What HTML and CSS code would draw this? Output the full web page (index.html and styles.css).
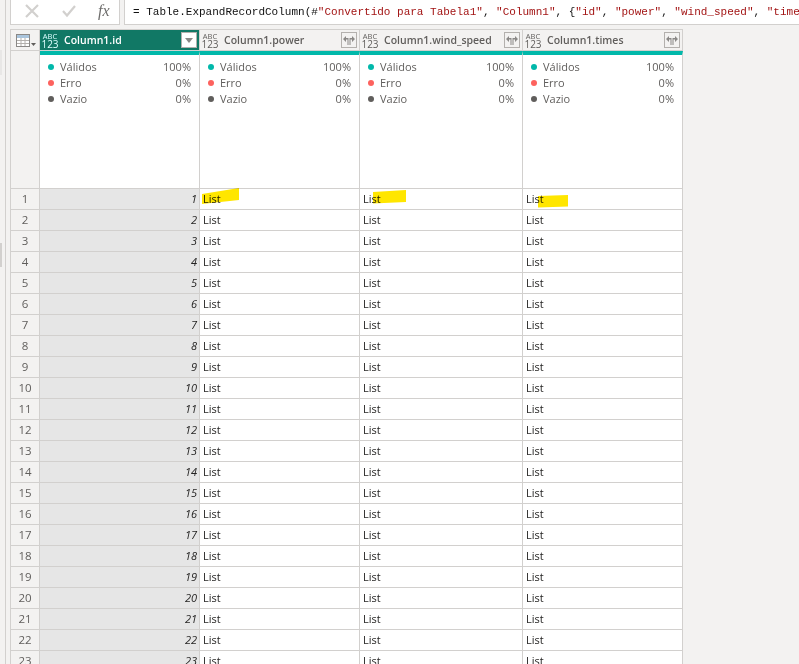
FILE: index.html
```html
<!DOCTYPE html>
<html lang="pt">
<head>
<meta charset="utf-8">
<title>Power Query</title>
<link rel="stylesheet" href="styles.css">
</head>
<body>
<div class="side"><i class="thumb thumb-a"></i><i class="thumb thumb-b"></i></div>
<main class="main">
  <div class="formula">
    <div class="fx-box">
      <svg class="ico" width="14" height="14" viewBox="0 0 14 14"><path d="M1 1L13 13M13 1L1 13" stroke="#d2d0ce" stroke-width="2.200" fill="none"/></svg>
      <svg class="ico" width="14" height="14" viewBox="0 0 14 14"><path d="M1 7L5 11.500L13 2" stroke="#d2d0ce" stroke-width="2.200" fill="none"/></svg>
      <span class="fx">fx</span>
    </div>
    <div class="fx-input"><span>= Table.ExpandRecordColumn(#<b>"Convertido para Tabela1"</b>, <b>"Column1"</b>, {<b>"id"</b>, <b>"power"</b>, <b>"wind_speed"</b>, <b>"time</b></span></div>
  </div>
  <div class="table">
    <div class="row head">
      <div class="c0 corner">
        <svg width="20" height="13" viewBox="0 0 20 13"><rect x="0.500" y="0.500" width="13" height="12" fill="#fff" stroke="#8a8886"/><path d="M1 1h12v3H1z" fill="#a9c4dc"/><path d="M5 4v8M9 4v8M1 6.500h12M1 9.500h12" stroke="#b3b0ad" fill="none"/><path d="M15 9h5l-2.500 3z" fill="#605e5c"/></svg>
      </div>
      <div class="c1 hc sel"><span class="type"><small>ABC</small>123</span><span class="name">Column1.id</span><span class="btn drop"><svg width="8" height="5" viewBox="0 0 8 5"><path d="M0 0h8L4 5z" fill="#8a8886"/></svg></span></div>
      <div class="c2 hc"><span class="type"><small>ABC</small>123</span><span class="name">Column1.power</span><span class="btn"><svg width="12" height="9" viewBox="0 0 12 9"><path d="M0 3L3 0v2h2.500v7h-1V3.500H3V6zM12 3L9 0v2H6.500v7h1V3.500H9V6z" fill="#8a8886"/></svg></span></div>
      <div class="c3 hc"><span class="type"><small>ABC</small>123</span><span class="name">Column1.wind_speed</span><span class="btn"><svg width="12" height="9" viewBox="0 0 12 9"><path d="M0 3L3 0v2h2.500v7h-1V3.500H3V6zM12 3L9 0v2H6.500v7h1V3.500H9V6z" fill="#8a8886"/></svg></span></div>
      <div class="c4 hc"><span class="type"><small>ABC</small>123</span><span class="name">Column1.times</span><span class="btn"><svg width="12" height="9" viewBox="0 0 12 9"><path d="M0 3L3 0v2h2.500v7h-1V3.500H3V6zM12 3L9 0v2H6.500v7h1V3.500H9V6z" fill="#8a8886"/></svg></span></div>
    </div>
    <div class="row stats">
      <div class="c0 blank"></div>
      <div class="c1 st"><p><i class="dot ok"></i>Válidos<em>100%</em></p><p><i class="dot err"></i>Erro<em>0%</em></p><p><i class="dot emp"></i>Vazio<em>0%</em></p></div>
      <div class="c2 st"><p><i class="dot ok"></i>Válidos<em>100%</em></p><p><i class="dot err"></i>Erro<em>0%</em></p><p><i class="dot emp"></i>Vazio<em>0%</em></p></div>
      <div class="c3 st"><p><i class="dot ok"></i>Válidos<em>100%</em></p><p><i class="dot err"></i>Erro<em>0%</em></p><p><i class="dot emp"></i>Vazio<em>0%</em></p></div>
      <div class="c4 st"><p><i class="dot ok"></i>Válidos<em>100%</em></p><p><i class="dot err"></i>Erro<em>0%</em></p><p><i class="dot emp"></i>Vazio<em>0%</em></p></div>
    </div>
    <div class="row"><div class="c0 num">1</div><div class="c1 id">1</div><div class="c2 li">List</div><div class="c3 li">List</div><div class="c4 li">List</div></div>
    <div class="row"><div class="c0 num">2</div><div class="c1 id">2</div><div class="c2 li">List</div><div class="c3 li">List</div><div class="c4 li">List</div></div>
    <div class="row"><div class="c0 num">3</div><div class="c1 id">3</div><div class="c2 li">List</div><div class="c3 li">List</div><div class="c4 li">List</div></div>
    <div class="row"><div class="c0 num">4</div><div class="c1 id">4</div><div class="c2 li">List</div><div class="c3 li">List</div><div class="c4 li">List</div></div>
    <div class="row"><div class="c0 num">5</div><div class="c1 id">5</div><div class="c2 li">List</div><div class="c3 li">List</div><div class="c4 li">List</div></div>
    <div class="row"><div class="c0 num">6</div><div class="c1 id">6</div><div class="c2 li">List</div><div class="c3 li">List</div><div class="c4 li">List</div></div>
    <div class="row"><div class="c0 num">7</div><div class="c1 id">7</div><div class="c2 li">List</div><div class="c3 li">List</div><div class="c4 li">List</div></div>
    <div class="row"><div class="c0 num">8</div><div class="c1 id">8</div><div class="c2 li">List</div><div class="c3 li">List</div><div class="c4 li">List</div></div>
    <div class="row"><div class="c0 num">9</div><div class="c1 id">9</div><div class="c2 li">List</div><div class="c3 li">List</div><div class="c4 li">List</div></div>
    <div class="row"><div class="c0 num">10</div><div class="c1 id">10</div><div class="c2 li">List</div><div class="c3 li">List</div><div class="c4 li">List</div></div>
    <div class="row"><div class="c0 num">11</div><div class="c1 id">11</div><div class="c2 li">List</div><div class="c3 li">List</div><div class="c4 li">List</div></div>
    <div class="row"><div class="c0 num">12</div><div class="c1 id">12</div><div class="c2 li">List</div><div class="c3 li">List</div><div class="c4 li">List</div></div>
    <div class="row"><div class="c0 num">13</div><div class="c1 id">13</div><div class="c2 li">List</div><div class="c3 li">List</div><div class="c4 li">List</div></div>
    <div class="row"><div class="c0 num">14</div><div class="c1 id">14</div><div class="c2 li">List</div><div class="c3 li">List</div><div class="c4 li">List</div></div>
    <div class="row"><div class="c0 num">15</div><div class="c1 id">15</div><div class="c2 li">List</div><div class="c3 li">List</div><div class="c4 li">List</div></div>
    <div class="row"><div class="c0 num">16</div><div class="c1 id">16</div><div class="c2 li">List</div><div class="c3 li">List</div><div class="c4 li">List</div></div>
    <div class="row"><div class="c0 num">17</div><div class="c1 id">17</div><div class="c2 li">List</div><div class="c3 li">List</div><div class="c4 li">List</div></div>
    <div class="row"><div class="c0 num">18</div><div class="c1 id">18</div><div class="c2 li">List</div><div class="c3 li">List</div><div class="c4 li">List</div></div>
    <div class="row"><div class="c0 num">19</div><div class="c1 id">19</div><div class="c2 li">List</div><div class="c3 li">List</div><div class="c4 li">List</div></div>
    <div class="row"><div class="c0 num">20</div><div class="c1 id">20</div><div class="c2 li">List</div><div class="c3 li">List</div><div class="c4 li">List</div></div>
    <div class="row"><div class="c0 num">21</div><div class="c1 id">21</div><div class="c2 li">List</div><div class="c3 li">List</div><div class="c4 li">List</div></div>
    <div class="row"><div class="c0 num">22</div><div class="c1 id">22</div><div class="c2 li">List</div><div class="c3 li">List</div><div class="c4 li">List</div></div>
    <div class="row"><div class="c0 num">23</div><div class="c1 id">23</div><div class="c2 li">List</div><div class="c3 li">List</div><div class="c4 li">List</div></div>
  </div>
</main>
<svg class="marks" width="799" height="664" viewBox="0 0 799 664"><path d="M202 194L239 188V200L202 204Z M373 192L406 190V202L373 203.500Z M538 196L568 195V206.500L538 207.500Z" fill="#ffe600"/></svg>
</body>
</html>
```
FILE: styles.css
```css
* { box-sizing: border-box; }
html, body { margin: 0; height: 664px; overflow: hidden; }
body { display: flex; background: #f3f2f1; font-family: "Open Sans", "Noto Sans", sans-serif; font-size: 11px; color: #333; position: relative; }
.side { width: 6px; margin-right: 4px; flex: none; display: block; position: relative; background: #f3f2f1; border-right: 1px solid #d2d0ce; }
.thumb { position: absolute; left: 0; width: 2px; }
.thumb-a { top: 50px; height: 25px; background: #e8e7e6; }
.thumb-b { top: 243px; height: 24px; background: #d2d0ce; }
.main { flex: 1; min-width: 0; }
.formula { display: flex; height: 25px; margin-bottom: 4px; gap: 4px; }
.fx-box { width: 110px; background: #fff; border: solid #d2d0ce; border-width: 0 1px 1px; display: flex; align-items: center; padding: 0 0 3px 14px; gap: 23px; }
.ico { flex: none; }
.fx { font-family: "Liberation Serif", serif; font-style: italic; font-size: 16px; line-height: 18px; color: #6f6e6d; margin-left: -1px; }
.fx-input { flex: 1; min-width: 0; background: #fff; border: solid #d2d0ce; border-width: 0 0 1px 1px; padding: 3px 0 0 8px; font-family: "Liberation Mono", monospace; font-size: 11px; line-height: 18px; white-space: nowrap; overflow: hidden; color: #111; }
.fx-input b { font-weight: normal; color: #a31515; }
.table { width: 673px; border-top: 1px solid #d2d0ce; border-left: 1px solid #d2d0ce; }
.row { display: flex; height: 21px; border-bottom: 1px solid #d2d0ce; background: #fff; }
.c0, .c1, .c2, .c3, .c4 { flex: none; border-right: 1px solid #d2d0ce; }
.c0 { width: 29px; background: #f3f2f1; }
.c1 { width: 160px; }
.c2 { width: 160px; }
.c3 { width: 163px; }
.c4 { width: 160px; }
.row.head { height: 21px; background: #f3f2f1; }
.corner { display: flex; align-items: center; padding: 0 0 0 5px; }
.hc { display: flex; align-items: center; padding: 0 2px 0 3px; }
.sel { background: #117865; color: #fff; }
.type { width: 14px; margin-right: 7px; font-size: 10px; line-height: 8px; color: #605e5c; text-align: center; flex: none; display: flex; flex-direction: column; align-items: center; }
.type small { font-size: 7.5px; line-height: 8px; }
.sel .type { color: #dff; }
.name { flex: 1; font-weight: 600; font-size: 10.5px; color: #605e5c; white-space: nowrap; }
.sel .name { color: #fff; }
.btn { width: 16px; height: 16px; border: 1px solid #b3b0ad; background: #f3f2f1; display: flex; align-items: center; justify-content: center; flex: none; }
.drop { background: #fff; }
.row.stats { height: 138px; }
.blank { background: #f3f2f1; }
.st { border-top: 4px solid #01b8aa; padding: 4px 8px 0 8px; }
.st p { margin: 0; height: 16px; line-height: 16px; display: flex; align-items: center; color: #605e5c; font-size: 11px; }
.st em { margin-left: auto; font-style: normal; }
.dot { width: 6px; height: 6px; border-radius: 50%; margin-right: 6px; }
.ok { background: #01b8aa; }
.err { background: #fd625e; }
.emp { background: #605e5c; }
.num { text-align: center; line-height: 20px; color: #605e5c; font-size: 11.5px; }
.id { background: #e6e6e6; text-align: right; padding-right: 2px; font-style: italic; line-height: 20px; color: #252423; }
.li { padding-left: 3px; line-height: 20px; color: #252423; }
.marks { position: absolute; left: 0; top: 0; mix-blend-mode: multiply; pointer-events: none; }
```
